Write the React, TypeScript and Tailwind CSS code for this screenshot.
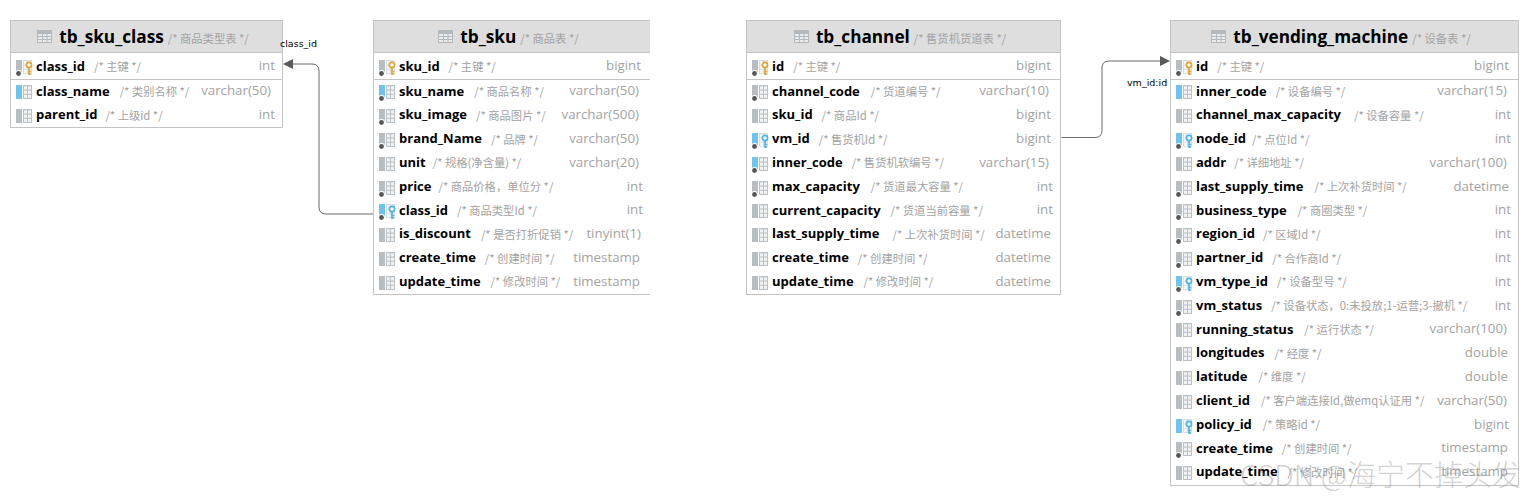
import React from 'react';

type Col = {
  name: string;
  comment: string;
  type: string;
  stripe?: boolean;
  fk?: boolean;
  dot?: boolean;
  gap?: number;
};

type Table = {
  name: string;
  comment: string;
  pos: string;
  noRight?: boolean;
  pk: Col;
  cols: Col[];
};

const FONT = "font-['Open_Sans','Noto_Sans_CJK_SC',sans-serif]";
const CJK = "font-['Noto_Sans_CJK_SC','Noto_Sans',sans-serif]";

// right inset of the type column differs a bit per type in the source diagram
const typeInset = (type: string) => {
  if (type === 'int') return 'pr-[7px]';
  if (type === 'bigint' || type === 'datetime' || type.startsWith('tinyint')) return 'pr-[9px]';
  if (type.startsWith('varchar')) return 'pr-[11px]';
  return 'pr-[10px]';
};

const TableGlyph = () => (
  <svg width="15" height="13" viewBox="0 0 15 13" className="shrink-0">
    <rect x="0" y="0" width="15" height="13" fill="#b4b9bd" />
    <rect x="1" y="4" width="4" height="2" fill="#e9ebec" />
    <rect x="6" y="4" width="3.5" height="2" fill="#e9ebec" />
    <rect x="10.5" y="4" width="3.5" height="2" fill="#e9ebec" />
    <rect x="1" y="7" width="4" height="2" fill="#e9ebec" />
    <rect x="6" y="7" width="3.5" height="2" fill="#e9ebec" />
    <rect x="10.5" y="7" width="3.5" height="2" fill="#e9ebec" />
    <rect x="1" y="10" width="4" height="2" fill="#e9ebec" />
    <rect x="6" y="10" width="3.5" height="2" fill="#e9ebec" />
    <rect x="10.5" y="10" width="3.5" height="2" fill="#e9ebec" />
  </svg>
);

const ColIcon = ({ stripe, keyColor, dot }: { stripe?: boolean; keyColor?: string; dot?: boolean }) => (
  <svg width="17" height="18" viewBox="0 0 17 18" className="shrink-0 mt-[4px]">
    <rect x="0" y="1" width="6" height="14" fill={stripe ? '#6ec4ec' : '#b8bdc1'} />
    <rect x="7" y="1" width="9" height="14" fill="#bcc1c5" />
    <rect x="8" y="2.300" width="3" height="3.200" fill="#f1f2f3" />
    <rect x="12" y="2.300" width="3" height="3.200" fill="#f1f2f3" />
    <rect x="8" y="6.600" width="3" height="3.200" fill="#f1f2f3" />
    <rect x="12" y="6.600" width="3" height="3.200" fill="#f1f2f3" />
    <rect x="8" y="10.800" width="3" height="3.200" fill="#f1f2f3" />
    <rect x="12" y="10.800" width="3" height="3.200" fill="#f1f2f3" />
    {keyColor && (
      <g>
        <rect x="6.500" y="1" width="10.500" height="15" fill="#fff" opacity="0.45" />
        <circle cx="13" cy="6" r="2.600" fill="#fff" stroke={keyColor} strokeWidth="1.700" />
        <path d="M13 8.500v7.500M13 12.500h2.200M13 15h2.200" stroke={keyColor} strokeWidth="1.700" fill="none" />
      </g>
    )}
    {dot && (
      <g>
        <circle cx="2.500" cy="14.500" r="3.400" fill="#fff" />
        <circle cx="2.500" cy="14.500" r="2.400" fill="#555" />
      </g>
    )}
  </svg>
);

const Row = ({ col, keyColor, rowH }: { col: Col; keyColor?: string; rowH: string }) => (
  <div className={`flex items-center pl-[5px] ${typeInset(col.type)} ${rowH}`}>
    <ColIcon stripe={col.stripe} keyColor={keyColor ?? (col.fk ? '#4fb3e3' : undefined)} dot={col.dot} />
    <span className={`ml-[3px] text-[13px] font-bold text-black ${FONT}`}>{col.name}</span>
    <span className={`text-[11.300px] text-[#a3a3a3] whitespace-nowrap ${CJK}`} style={{ marginLeft: col.gap ?? 9 }}>
      {col.comment}
    </span>
    <span className={`ml-auto text-[13.300px] text-[#a3a3a3] whitespace-nowrap ${FONT}`}>{col.type}</span>
  </div>
);

const ErTable = ({ table }: { table: Table }) => (
  <div className={`absolute bg-white border border-[#c4c4c4] ${table.noRight ? 'border-r-0' : ''} ${table.pos}`}>
    <div className="flex h-[32px] items-center justify-center gap-[7px] bg-[#dedede] border-b border-[#c4c4c4] pr-[7px]">
      <TableGlyph />
      <span className={`text-[17.200px] font-bold text-black ${FONT}`}>{table.name}</span>
      <span className={`text-[11.300px] text-[#a3a3a3] -ml-[3px] mt-[3px] ${CJK}`}>{table.comment}</span>
    </div>
    <div className="border-b border-[#c4c4c4] pt-[1px]">
      <Row col={table.pk} keyColor="#e0a63c" rowH="h-[24.500px]" />
    </div>
    <div>
      {table.cols.map(c => (
        <Row key={c.name} col={c} rowH="h-[23.800px]" />
      ))}
    </div>
  </div>
);

const tables: Table[] = [
  {
    name: 'tb_sku_class',
    comment: '/* 商品类型表 */',
    pos: 'left-[10px] top-[20px] w-[273px] h-[108px]',
    pk: { name: 'class_id', comment: '/* 主键 */', type: 'int', dot: true },
    cols: [
      { name: 'class_name', comment: '/* 类别名称 */', type: 'varchar(50)', stripe: true, gap: 10 },
      { name: 'parent_id', comment: '/* 上级id */', type: 'int', gap: 8 },
    ],
  },
  {
    name: 'tb_sku',
    comment: '/* 商品表 */',
    pos: 'left-[373px] top-[20px] w-[277px] h-[275px]',
    noRight: true,
    pk: { name: 'sku_id', comment: '/* 主键 */', type: 'bigint', dot: true },
    cols: [
      { name: 'sku_name', comment: '/* 商品名称 */', type: 'varchar(50)', stripe: true, dot: true, gap: 10 },
      { name: 'sku_image', comment: '/* 商品图片 */', type: 'varchar(500)', dot: true },
      { name: 'brand_Name', comment: '/* 品牌 */', type: 'varchar(50)', dot: true },
      { name: 'unit', comment: '/* 规格(净含量) */', type: 'varchar(20)', gap: 7 },
      { name: 'price', comment: '/* 商品价格，单位分 */', type: 'int', dot: true, gap: 7 },
      { name: 'class_id', comment: '/* 商品类型Id */', type: 'int', stripe: true, fk: true, dot: true },
      { name: 'is_discount', comment: '/* 是否打折促销 */', type: 'tinyint(1)', gap: 10 },
      { name: 'create_time', comment: '/* 创建时间 */', type: 'timestamp' },
      { name: 'update_time', comment: '/* 修改时间 */', type: 'timestamp', gap: 10 },
    ],
  },
  {
    name: 'tb_channel',
    comment: '/* 售货机货道表 */',
    pos: 'left-[746px] top-[20px] w-[315px] h-[275px]',
    pk: { name: 'id', comment: '/* 主键 */', type: 'bigint', dot: true },
    cols: [
      { name: 'channel_code', comment: '/* 货道编号 */', type: 'varchar(10)', dot: true, gap: 11 },
      { name: 'sku_id', comment: '/* 商品Id */', type: 'bigint' },
      { name: 'vm_id', comment: '/* 售货机Id */', type: 'bigint', stripe: true, fk: true, dot: true },
      { name: 'inner_code', comment: '/* 售货机软编号 */', type: 'varchar(15)', stripe: true, dot: true },
      { name: 'max_capacity', comment: '/* 货道最大容量 */', type: 'int', dot: true, gap: 11 },
      { name: 'current_capacity', comment: '/* 货道当前容量 */', type: 'int', gap: 10 },
      { name: 'last_supply_time', comment: '/* 上次补货时间 */', type: 'datetime', gap: 13 },
      { name: 'create_time', comment: '/* 创建时间 */', type: 'datetime' },
      { name: 'update_time', comment: '/* 修改时间 */', type: 'datetime', gap: 10 },
    ],
  },
  {
    name: 'tb_vending_machine',
    comment: '/* 设备表 */',
    pos: 'left-[1170px] top-[20px] w-[349px] h-[466px]',
    pk: { name: 'id', comment: '/* 主键 */', type: 'bigint', dot: true },
    cols: [
      { name: 'inner_code', comment: '/* 设备编号 */', type: 'varchar(15)', stripe: true },
      { name: 'channel_max_capacity', comment: '/* 设备容量 */', type: 'int', gap: 13 },
      { name: 'node_id', comment: '/* 点位Id */', type: 'int', stripe: true, fk: true, dot: true, gap: 6 },
      { name: 'addr', comment: '/* 详细地址 */', type: 'varchar(100)', gap: 8 },
      { name: 'last_supply_time', comment: '/* 上次补货时间 */', type: 'datetime', dot: true, gap: 11 },
      { name: 'business_type', comment: '/* 商圈类型 */', type: 'int', dot: true, gap: 11 },
      { name: 'region_id', comment: '/* 区域Id */', type: 'int', dot: true, gap: 8 },
      { name: 'partner_id', comment: '/* 合作商Id */', type: 'int', dot: true },
      { name: 'vm_type_id', comment: '/* 设备型号 */', type: 'int', stripe: true, fk: true, dot: true },
      { name: 'vm_status', comment: '/* 设备状态，0:未投放;1-运营;3-撤机 */', type: 'int', dot: true },
      { name: 'running_status', comment: '/* 运行状态 */', type: 'varchar(100)', gap: 11 },
      { name: 'longitudes', comment: '/* 经度 */', type: 'double', gap: 10 },
      { name: 'latitude', comment: '/* 维度 */', type: 'double', gap: 11 },
      { name: 'client_id', comment: '/* 客户端连接Id,做emq认证用 */', type: 'varchar(50)', gap: 11 },
      { name: 'policy_id', comment: '/* 策略id */', type: 'bigint', stripe: true, fk: true, gap: 11 },
      { name: 'create_time', comment: '/* 创建时间 */', type: 'timestamp', dot: true },
      { name: 'update_time', comment: '/* 修改时间 */', type: 'timestamp', gap: 10 },
    ],
  },
];

const Connectors = () => (
  <svg width="1534" height="499" className="absolute left-0 top-0 pointer-events-none">
    <path d="M373 214H326q-7 0-7-7V71q0-7-7-7H293" fill="none" stroke="#6b6b6b" strokeWidth="1" />
    <path d="M283 64l10-5v10z" fill="#5a5a5a" />
    <path d="M1061.500 137.500H1095q7 0 7-7V68q0-7 7-7h51" fill="none" stroke="#6b6b6b" strokeWidth="1" />
    <path d="M1170 61l-10-5v10z" fill="#5a5a5a" />
  </svg>
);

export default function App() {
  return (
    <div className="relative w-[1534px] h-[499px] bg-white overflow-hidden">
      {tables.map(t => (
        <ErTable key={t.name} table={t} />
      ))}
      <Connectors />
      <span className="absolute left-[280px] top-[38px] text-[9.500px] leading-[12px] text-black font-['DejaVu_Sans',sans-serif]">class_id</span>
      <span className="absolute left-[1127px] top-[77px] text-[9.500px] leading-[12px] text-black font-['DejaVu_Sans',sans-serif]">vm_id:id</span>
      <span className={`absolute left-[1240px] top-[452px] text-[29px] leading-[42px] font-light text-[#8a8a8a]/40 whitespace-nowrap ${CJK}`}>CSDN @海宁不掉头发</span>
    </div>
  );
}
